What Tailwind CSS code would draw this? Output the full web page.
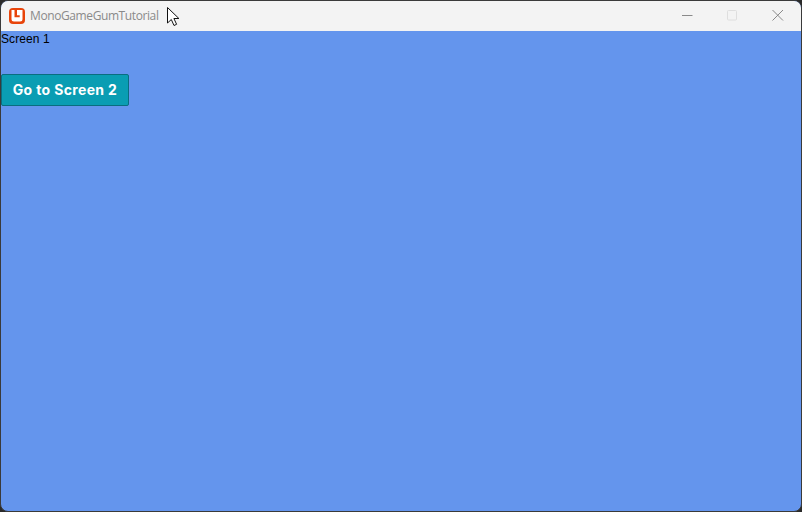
<!DOCTYPE html>
<html>
<head>
<meta charset="utf-8">
<script src="https://cdn.jsdelivr.net/npm/@tailwindcss/browser@4"></script>
</head>
<body class="bg-[#2a2a2a]">
<div class="relative w-[802px] h-[512px] bg-[#6495ed] border border-[#3a3a3a] rounded-lg overflow-hidden flex flex-col font-['Liberation_Sans',sans-serif]">
  <div class="h-[30px] shrink-0 bg-[#f3f3f3] flex items-center">
    <svg class="ml-[8px] w-[16px] h-[16px]" viewBox="0 0 16 16">
      <rect x="0" y="0" width="16" height="16" rx="4" fill="#e8440a"/>
      <path d="M2.5 2h3v7.2h5.2v-2h-2.7v-5.2h5.5v9a2.5 2.5 0 0 1-2.5 2.5h-6a2.5 2.5 0 0 1-2.5-2.5z" fill="#fff"/>
    </svg>
    <span class="ml-[5px] text-[12px] leading-none text-[#8a8a8a] font-['Open_Sans',sans-serif] tracking-[-0.4px]">MonoGameGumTutorial</span>
    <div class="ml-auto flex items-center h-full pr-[1px]">
      <svg class="w-[46px] h-[30px]" viewBox="0 0 46 30"><path d="M19 14.5h10.5" stroke="#8a8a8a" stroke-width="1"/></svg>
      <svg class="w-[46px] h-[30px]" viewBox="0 0 46 30"><rect x="18.5" y="9.5" width="9" height="9.5" rx="1" fill="none" stroke="#dedede"/></svg>
      <svg class="w-[45px] h-[30px]" viewBox="0 0 45 30"><path d="M17.5 9l10.5 10.5M28 9L17.5 19.5" stroke="#8a8a8a" stroke-width="1"/></svg>
    </div>
  </div>
  <div class="flex-1 flex flex-col items-start">
    <span class="text-[12px] leading-[14px] mt-[1px] text-black tracking-[0.1px]">Screen 1</span>
    <button class="mt-[28px] w-[128px] h-[32px] pb-[1px] bg-[#0a9db3] border border-[#0a6e80] rounded-[2px] text-white text-[14px] font-bold font-['Inter',sans-serif] tracking-[0.35px] flex items-center justify-center">Go to Screen 2</button>
  </div>
  <svg class="absolute left-[165px] top-[5px] w-[14px] h-[21px]" viewBox="0 0 14 21">
    <path d="M1.5 1.5v15.5l3.8-3.5 2.7 6 2.6-1.2-2.7-5.8h5z" fill="#fff" stroke="#111" stroke-width="1"/>
  </svg>
</div>
</body>
</html>
